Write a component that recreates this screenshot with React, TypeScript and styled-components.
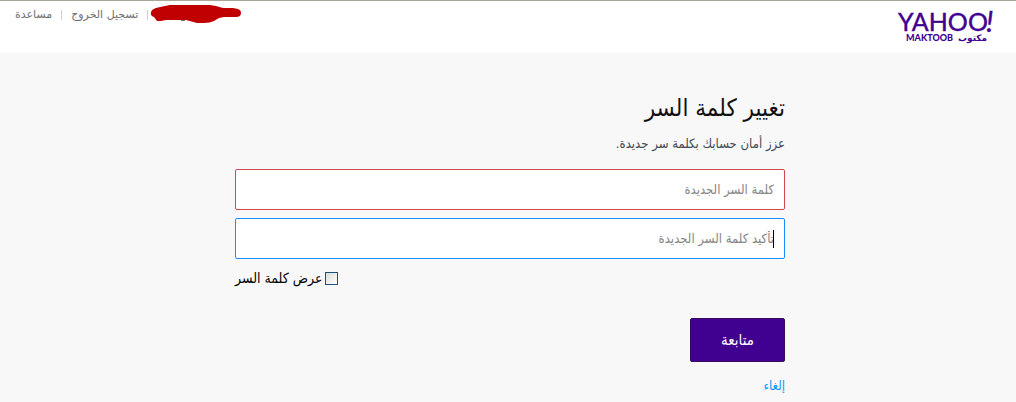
import React, { useState } from 'react';
import styled, { createGlobalStyle } from 'styled-components';

const GlobalStyle = createGlobalStyle`
  *, *::before, *::after { box-sizing: border-box; }
  body {
    margin: 0;
    background: #f8f8f8;
    color: #000;
    font-family: "DejaVu Sans Condensed", "DejaVu Sans", sans-serif;
  }
`;

const Page = styled.div`
  direction: rtl;
`;

const Header = styled.header`
  display: flex;
  justify-content: space-between;
  align-items: flex-start;
  height: 53px;
  padding: 8px 21px 0 15px;
  background: #fff;
  border-top: 1px solid #aca899;
`;

const LogoLink = styled.a`
  display: block;
  height: 36px;
`;

const AccountNav = styled.nav`
  display: flex;
  align-items: center;
  height: 12px;
`;

const NavLink = styled.a`
  padding: 0 9px;
  font-family: "DejaVu Sans", sans-serif;
  font-size: 11px;
  line-height: 10px;
  color: #6e6e6e;
  text-decoration: none;

  & + & { border-right: 1px solid #d0d0d0; }
  &:first-child { padding: 0 0 0 2px; }
  &:last-child { padding-left: 0; }
`;

const Main = styled.main`
  display: flex;
  justify-content: center;
  padding: 37px 16px 8px 20px;
`;

const Form = styled.form`
  display: flex;
  flex-direction: column;
  align-items: flex-start;
  width: 100%;
  max-width: 550px;
`;

const Title = styled.h1`
  margin: 0;
  font-size: 24px;
  line-height: 36px;
  font-weight: 400;
  color: #111;
`;

const Intro = styled.p`
  margin: 8px 0 15px;
  font-size: 13px;
  line-height: 20px;
  color: #414853;
`;

const Field = styled.div`
  position: relative;
  width: 100%;
  margin-bottom: 8px;
`;

const PasswordInput = styled.input<{ $tone: string }>`
  display: block;
  width: 100%;
  height: 41px;
  padding: 0 10px;
  border: 1px solid ${(p) => p.$tone};
  border-radius: 2px;
  background: #fff;
  font-family: inherit;
  font-size: 13px;
  outline: none;
  caret-color: transparent;

  &::placeholder { color: #858585; opacity: 1; }
`;

const Caret = styled.span`
  position: absolute;
  top: 12px;
  right: 11px;
  width: 1px;
  height: 18px;
  background: #000;
`;

const ShowLabel = styled.label`
  display: flex;
  align-items: center;
  align-self: flex-end;
  gap: 3px;
  margin-top: 1px;
  font-size: 14px;
  line-height: 20px;
`;

const Checkbox = styled.input`
  appearance: none;
  width: 13px;
  height: 13px;
  margin: 0;
  border: 1px solid #1c5180;
  background: linear-gradient(135deg, #dcdcd7, #fff);

  &:checked { background: #1c5180; }
`;

const SubmitButton = styled.button`
  width: 95px;
  height: 44px;
  margin-top: 30px;
  padding: 0;
  border: 1px solid #38095c;
  border-radius: 2px;
  background: #400090;
  color: #fff;
  font-family: inherit;
  font-size: 15px;
  font-weight: 400;
`;

const CancelLink = styled.a`
  margin-top: 14px;
  font-size: 13px;
  line-height: 20px;
  color: #0c99f5;
  text-decoration: none;
`;

const Logo = () => (
  <svg width="98" height="36" viewBox="0 0 98 36" overflow="visible" direction="ltr" role="img" aria-label="Yahoo Maktoob">
    <g fill="#400090" stroke="#400090" strokeWidth="0">
      <text x="1" y="22" fontFamily="Lato, sans-serif" fontSize="25" strokeWidth="0.4">YAHOO</text>
      <text x="89" y="23" fontFamily="Lato, sans-serif" fontSize="29" fontStyle="italic" strokeWidth="0.4">!</text>
      <text x="9" y="32" fontFamily="Lato, sans-serif" fontSize="9" fontWeight="900">MAKTOOB</text>
      <text x="61" y="32" fontFamily="DejaVu Sans, sans-serif" fontSize="9" fontWeight="700">مكتوب</text>
    </g>
  </svg>
);

const Redaction = () => (
  <svg width="92" height="20" viewBox="0 0 92 20" aria-hidden="true">
    <path
      d="M6 4Q10 3 15 2L20 1H60L66 2L73 4H83L88 5Q91 6 91 9Q91 13 86 13H74L69 14L64 17Q60 19 54 19H47L36 16H16L11 17H7L4 13Q0 12 1 8Q2 5 6 4Z"
      fill="#c00000"
    />
    <path d="M31 16.500H35" stroke="#6e6e6e" />
  </svg>
);

export default function App() {
  const [visible, setVisible] = useState(false);
  const type = visible ? 'text' : 'password';

  return (
    <Page lang="ar">
      <GlobalStyle />
      <Header>
        <LogoLink href="#home"><Logo /></LogoLink>
        <AccountNav>
          <NavLink href="#account" aria-label="الحساب"><Redaction /></NavLink>
          <NavLink href="#logout">تسجيل الخروج</NavLink>
          <NavLink href="#help">مساعدة</NavLink>
        </AccountNav>
      </Header>
      <Main>
        <Form onSubmit={(e) => e.preventDefault()}>
          <Title>تغيير كلمة السر</Title>
          <Intro>عزز أمان حسابك بكلمة سر جديدة.</Intro>
          <Field>
            <PasswordInput $tone="#d0484f" type={type} placeholder="كلمة السر الجديدة" aria-label="كلمة السر الجديدة" />
          </Field>
          <Field>
            <PasswordInput $tone="#188fff" type={type} placeholder="تأكيد كلمة السر الجديدة" aria-label="تأكيد كلمة السر الجديدة" />
            <Caret />
          </Field>
          <ShowLabel>
            <Checkbox type="checkbox" checked={visible} onChange={(e) => setVisible(e.target.checked)} />
            عرض كلمة السر
          </ShowLabel>
          <SubmitButton type="submit">متابعة</SubmitButton>
          <CancelLink href="#cancel">إلغاء</CancelLink>
        </Form>
      </Main>
    </Page>
  );
}
